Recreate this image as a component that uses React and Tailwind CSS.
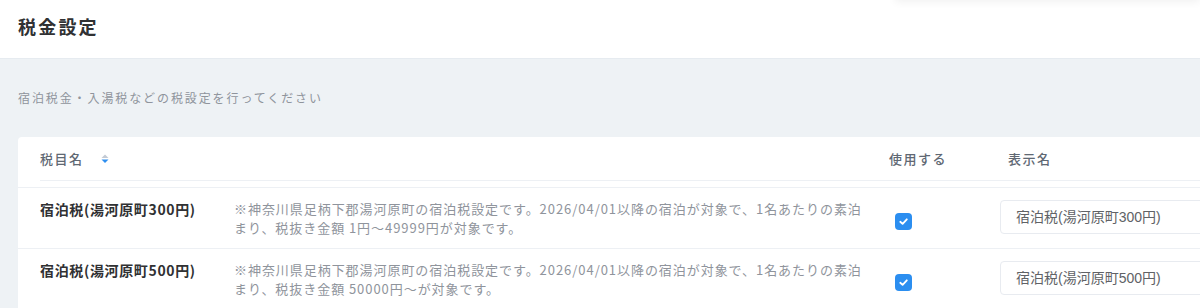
import React from "react";

const JP = { fontFamily: '"Noto Sans CJK JP", "Noto Sans", sans-serif' };
const INPUT_FONT = { fontFamily: '"Liberation Sans", "Noto Sans CJK JP", sans-serif' };

function SortIcon() {
  return (
    <svg width="8" height="10" viewBox="0 0 8 10" className="ml-[17px]">
      <path d="M4 0.5 L7.5 4 L0.5 4 Z" fill="#c3cad4" />
      <path d="M0.5 5.5 L7.5 5.5 L4 9 Z" fill="#2f8ff0" />
    </svg>
  );
}

function Check() {
  return (
    <div className="w-[17px] h-[17px] rounded-[4px] bg-[#2b8ef0] flex items-center justify-center">
      <svg width="11" height="11" viewBox="0 0 12 12">
        <path d="M2.5 6.3 L5 8.6 L9.6 3.6" fill="none" stroke="#fff" strokeWidth="2" strokeLinecap="round" strokeLinejoin="round" />
      </svg>
    </div>
  );
}

const rows = [
  {
    name: "宿泊税(湯河原町300円)",
    l1: "※神奈川県足柄下郡湯河原町の宿泊税設定です。2026/04/01以降の宿泊が対象で、1名あたりの素泊",
    l2: "まり、税抜き金額 1円～49999円が対象です。",
  },
  {
    name: "宿泊税(湯河原町500円)",
    l1: "※神奈川県足柄下郡湯河原町の宿泊税設定です。2026/04/01以降の宿泊が対象で、1名あたりの素泊",
    l2: "まり、税抜き金額 50000円～が対象です。",
  },
];

export default function App() {
  return (
    <div className="relative w-[1200px] h-[308px] overflow-hidden bg-[#eef2f5]" style={JP}>
      <div className="absolute top-[-12px] left-[895px] right-0 h-[12px] bg-white shadow-[0_2px_8px_rgba(0,0,0,0.06)] z-10" />
      <div className="h-[59px] bg-white border-b border-[#e6ebf0] pl-[18px] pt-[14px]">
        <h1 className="text-[18px] leading-[24px] font-bold text-[#303133] tracking-[2.2px]">税金設定</h1>
      </div>
      <p className="pl-[18px] pt-[29px] text-[12px] leading-[20px] text-[#8f949c] tracking-[1.9px]">
        宿泊税金・入湯税などの税設定を行ってください
      </p>
      <div className="mt-[29px] ml-[18px] w-[1200px] bg-white rounded-tl-[4px] pl-[22px]">
        <div className="h-[44px] flex items-center border-b border-[#edf0f4] text-[13px] text-[#606873] font-medium tracking-[1.5px]">
          <div className="w-[194px] shrink-0 flex items-center">
            <span>税目名</span>
            <SortIcon />
          </div>
          <div className="w-[655px] shrink-0" />
          <div className="w-[111px] shrink-0">使用する</div>
          <div className="pl-[8px] shrink-0">表示名</div>
        </div>
        <div className="h-[6px]" />
        {rows.map((r, i) => (
          <div key={i} className="flex border-t border-[#edf0f4] -ml-[22px] pl-[22px]">
            <div className="w-[194px] shrink-0 pt-[11px] text-[14px] leading-[20px] font-bold text-[#303133] tracking-[0.65px]">
              {r.name}
            </div>
            <div className="w-[655px] shrink-0 whitespace-nowrap pt-[11px] pb-[11px] text-[13px] leading-[19px] text-[#8f949c] tracking-[0.95px]">
              {r.l1}
              <br />
              {r.l2}
            </div>
            <div className="w-[111px] shrink-0 pl-[6px] pt-[25px]">
              <Check />
            </div>
            <div className="pt-[12px] shrink-0">
              <div
                className="w-[260px] h-[34px] border border-[#e8ebf0] rounded-[4px] pl-[15px] flex items-center text-[14px] text-[#606266]"
                style={INPUT_FONT}
              >
                {r.name}
              </div>
            </div>
          </div>
        ))}
      </div>
    </div>
  );
}
